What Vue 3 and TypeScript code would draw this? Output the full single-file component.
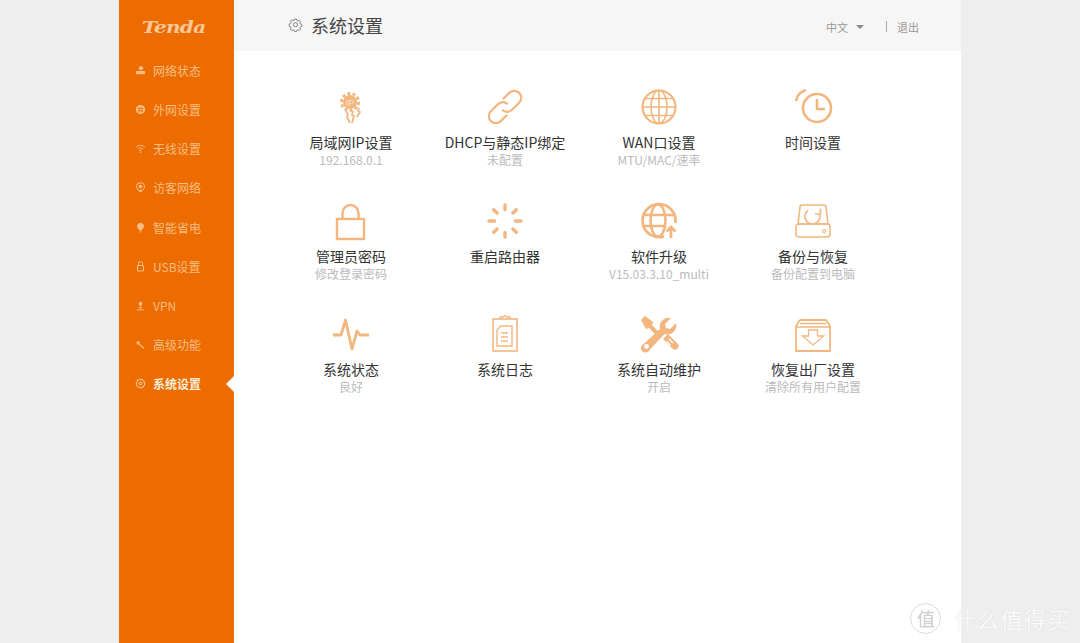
<template>
  <div class="page">
    <aside class="sidebar">
      <div class="logo"><span>Tenda</span></div>
      <ul class="menu">
        <li v-for="m in menu" :key="m.label" class="menu-item" :class="{ active: m.active }">
          <svg class="menu-icon" viewBox="0 0 12 12" v-html="m.icon"></svg>
          <span>{{ m.label }}</span>
        </li>
      </ul>
    </aside>
    <main class="main">
      <header class="topbar">
        <div class="title">
          <svg class="title-icon" viewBox="0 0 16 16" fill="none" stroke="#777" stroke-width="1">
            <path d="M6.8 1.5h2.4l.4 1.8 1.3.6 1.6-1 1.6 1.7-1 1.5.6 1.3 1.8.4v2.4l-1.8.4-.6 1.3 1 1.5-1.6 1.7-1.6-1-1.3.6-.4 1.8H6.8l-.4-1.8-1.3-.6-1.6 1-1.6-1.7 1-1.5-.6-1.3-1.8-.4V7.4l1.8-.4.6-1.3-1-1.5 1.6-1.7 1.6 1 1.3-.6z" transform="translate(.8 .8) scale(.9)" />
            <circle cx="8" cy="8.2" r="2.2" />
          </svg>
          <h1>系统设置</h1>
        </div>
        <div class="top-actions">
          <span class="lang">中文<i class="caret"></i></span>
          <span class="sep"></span>
          <span class="logout">退出</span>
        </div>
      </header>
      <section class="grid">
        <div v-for="c in cards" :key="c.title" class="card">
          <svg class="card-icon" viewBox="0 0 40 40" fill="none" stroke="#f3b67f" stroke-width="2" v-html="c.icon"></svg>
          <div class="card-title">{{ c.title }}</div>
          <div class="card-sub">{{ c.sub }}</div>
        </div>
      </section>
    </main>
    <div class="watermark">
      <span class="wm-badge">值</span>
      <span>什么值得买</span>
    </div>
  </div>
</template>

<script setup lang="ts">
const menu: { label: string; icon: string; active?: boolean }[] = [
  {
    label: '网络状态',
    icon: '<circle cx="6.5" cy="3.5" r="2.3" fill="#f8bd85"/><rect x="1" y="6.5" width="10" height="3.5" rx="1" fill="#f8bd85"/>'
  },
  {
    label: '外网设置',
    icon: '<circle cx="6" cy="6" r="5" fill="#f8bd85"/><path d="M3 5h6M3 7.500h6M4.600 3v6.500M7.400 3v6.500" stroke="#ec6c00" stroke-width=".8"/>'
  },
  {
    label: '无线设置',
    icon: '<path d="M1.200 4.400a7 7 0 0 1 9.600 0M3 6.400a4.400 4.400 0 0 1 6 0M4.600 8.200a2 2 0 0 1 2.800 0" fill="none" stroke="#f8bd85" stroke-width="1"/><circle cx="6" cy="10" r=".9" fill="#f8bd85"/>'
  },
  {
    label: '访客网络',
    icon: '<circle cx="6" cy="5" r="4.300" fill="none" stroke="#f8bd85" stroke-width="1.100"/><circle cx="6" cy="5" r="2" fill="#f8bd85"/><path d="M4 10.500h4" stroke="#f8bd85" stroke-width="1"/>'
  },
  {
    label: '智能省电',
    icon: '<path d="M6 .8a3.900 3.900 0 0 1 2.200 7.100L7.500 9.200h-3l-.7-1.300A3.900 3.900 0 0 1 6 .8z" fill="#f8bd85"/><path d="M4.800 10.800h2.400" stroke="#f8bd85" stroke-width="1"/>'
  },
  {
    label: 'USB设置',
    icon: '<path d="M3.800 5V1.200h4.400V5" fill="none" stroke="#f8bd85" stroke-width="1"/><rect x="2.700" y="5" width="6.600" height="6" rx=".6" fill="none" stroke="#f8bd85" stroke-width="1.100"/>'
  },
  {
    label: 'VPN',
    icon: '<circle cx="6" cy="4" r="2" fill="#f8bd85"/><path d="M6 4v5M4 7.500 6 9.500l2-2M2 10.800h8" fill="none" stroke="#f8bd85" stroke-width="1"/>'
  },
  {
    label: '高级功能',
    icon: '<path d="M1.500 4.200 3.600 2l1.700 2-.6.9L10.500 10l-1 1-5.400-5-1 .4z" fill="#f8bd85"/>'
  },
  {
    label: '系统设置',
    active: true,
    icon: '<circle cx="6" cy="6" r="4.600" fill="none" stroke="#fbd9b8" stroke-width="1.100" stroke-dasharray="2.200 .5"/><circle cx="6" cy="6" r="1.700" fill="none" stroke="#fbd9b8" stroke-width="1"/>'
  }
]

const cards: { title: string; sub: string; icon: string }[] = [
  {
    title: '局域网IP设置',
    sub: '192.168.0.1',
    icon: '<circle cx="19" cy="15" r="8.500" stroke-width="3" stroke-dasharray="3 2.300"/><circle cx="19" cy="15" r="7" fill="#f3b67f" stroke="none"/><text x="19" y="18.500" text-anchor="middle" font-size="9" font-family="Liberation Sans" fill="#fde6cf" stroke="none">IP</text><path d="M15 24l2 4-1 2 3 6M22 24l-1 4 2 1-2 7M28 21l-1 3 2 1-3 5" stroke-width="1.800"/>'
  },
  {
    title: 'DHCP与静态IP绑定',
    sub: '未配置',
    icon: '<g transform="rotate(-45 20 20)" stroke-width="2.200"><path d="M24 13h9a7 7 0 0 1 0 14H23a7 7 0 0 1-7-7"/><path d="M16 27H7a7 7 0 0 1 0-14h10a7 7 0 0 1 7 7"/></g>'
  },
  {
    title: 'WAN口设置',
    sub: 'MTU/MAC/速率',
    icon: '<circle cx="20" cy="20" r="16.500" stroke-width="2.200"/><ellipse cx="20" cy="20" rx="8" ry="16.500" stroke-width="1.600"/><path d="M20 3.500v33M3.500 20h33M6 11.500h28M6 28.500h28" stroke-width="1.600"/>'
  },
  {
    title: '时间设置',
    sub: '',
    icon: '<circle cx="24" cy="21" r="14" stroke-width="2.600"/><path d="M24 12v10h8" stroke-width="2.600"/><path d="M3 14A14 14 0 0 1 13 3" stroke-width="2.600"/>'
  },
  {
    title: '管理员密码',
    sub: '修改登录密码',
    icon: '<rect x="6" y="18" width="27" height="20" stroke-width="2.400"/><path d="M11.500 18v-6a8 8 0 0 1 16 0v6" stroke-width="2.400"/>'
  },
  {
    title: '重启路由器',
    sub: '',
    icon: '<g stroke-width="3.400" stroke-linecap="round"><path d="M20 4v4.500M20 31.500V36M4 20h5.500M30.500 20H36M8.700 8.700l3.400 3.200M27.900 28.100l3.400 3.200M8.700 31.300l3.400-3.200M27.900 11.900l3.400-3.200"/></g>'
  },
  {
    title: '软件升级',
    sub: 'V15.03.3.10_multi',
    icon: '<path d="M25 35.400A16.500 16.500 0 1 1 36.400 22" stroke-width="2.800"/><ellipse cx="19" cy="19.500" rx="7.500" ry="16" stroke-width="2.600"/><path d="M3 14h32M3 25h24" stroke-width="2.600"/><path d="M32 37V26M27.500 30.500 32 26l4.500 4.500" stroke-width="2.800"/>'
  },
  {
    title: '备份与恢复',
    sub: '备份配置到电脑',
    icon: '<path d="M9 4h22a2 2 0 0 1 2 2l2 17H5L7 6a2 2 0 0 1 2-2z" stroke-width="1.600"/><rect x="3" y="23" width="34" height="13" rx="3" stroke-width="1.600"/><circle cx="31" cy="30" r="1.500" stroke-width="1.200"/><path d="M15 9.500a7.500 7.500 0 1 0 11.500 3.500M27.500 7.500v5.500H22" stroke-width="1.600"/>'
  },
  {
    title: '系统状态',
    sub: '良好',
    icon: '<path d="M2 21h8l4.500-15 6.500 29 5-18 3 4h9" stroke-width="2.800" stroke-linejoin="round"/>'
  },
  {
    title: '系统日志',
    sub: '',
    icon: '<rect x="8" y="5" width="24" height="32" stroke-width="1.600"/><path d="M15 5V3h3l2-1.500L22 3h3v2" stroke-width="1.400"/><path d="M16 12h11v20H12V16z" stroke-width="1.400"/><path d="M16 19h7M16 23h7M16 27h7" stroke-width="1.400"/>'
  },
  {
    title: '系统自动维护',
    sub: '开启',
    icon: '<path d="M2 6 6 2l8 6-1 3 7 7-3 3-7-7-3 1z" fill="#f3b67f" stroke="none"/><path d="M37 9 31 15l-4-1-1-4 6-6a9 9 0 0 0-11 11L4.500 30a4.500 4.500 0 1 0 6 6L25.500 20a9 9 0 0 0 11.500-11z" fill="#f3b67f" stroke="none"/><circle cx="7.500" cy="32.500" r="2.400" fill="#fff" stroke="none"/><path d="m24 25 5-5 9.500 9.500a3.500 3.500 0 0 1-5 5z" fill="#f3b67f" stroke="none"/><path d="m30 25 4 4M27.500 27.500l4 4" stroke="#fff" stroke-width="1.400"/>'
  },
  {
    title: '恢复出厂设置',
    sub: '清除所有用户配置',
    icon: '<path d="M8 6h24a2 2 0 0 1 1.500.7L37 12v25H3V12l3.500-5.300A2 2 0 0 1 8 6z" stroke-width="1.800" stroke-linejoin="round"/><path d="M3 13h34M7 9.500h26" stroke-width="1.300"/><path d="M15.500 16h9v6h6L20 31 9.500 22h6z" stroke-width="1.300"/>'
  }
]
</script>

<style>
body {
  background: #eeeeee;
}
</style>

<style scoped>
.page {
  display: flex;
  width: 842px;
  height: 643px;
  margin-left: 119px;
  font-family: "Noto Sans CJK SC", "Liberation Sans", sans-serif;
}

.sidebar {
  width: 115px;
  flex-shrink: 0;
  background: #ec6c00;
}

.logo {
  height: 51px;
  padding: 14px 0 0 23px;
  box-sizing: border-box;
  font-family: "DejaVu Serif", serif;
  font-style: italic;
  font-weight: 700;
  font-size: 17px;
  line-height: 26px;
  letter-spacing: -0.6px;
  color: #f8c898;
}

.logo span {
  display: inline-block;
  transform: scaleX(1.18);
  transform-origin: left center;
}

.menu {
  list-style: none;
  margin: 0;
  padding: 0;
}

.menu-item {
  position: relative;
  display: flex;
  align-items: center;
  height: 39.15px;
  padding-left: 16px;
  font-size: 12px;
  color: #f8bd85;
}

.menu-item.active {
  color: #fdeedd;
  font-weight: 700;
}

.menu-item.active::after {
  content: "";
  position: absolute;
  right: 0;
  top: 50%;
  margin-top: -8px;
  border: 8px solid transparent;
  border-left-width: 0;
  border-right-color: #fff;
}

.menu-icon {
  width: 11px;
  height: 11px;
  margin-right: 7px;
  flex-shrink: 0;
}

.main {
  flex: 1;
  min-width: 0;
  background: #fff;
}

.topbar {
  display: flex;
  align-items: center;
  justify-content: space-between;
  height: 51px;
  padding: 0 42px 2px 54px;
  box-sizing: border-box;
  background: #f6f6f6;
}

.title {
  display: flex;
  align-items: center;
  gap: 8px;
}

.title-icon {
  width: 15px;
  height: 15px;
}

h1 {
  margin: 0;
  font-size: 18px;
  font-weight: 400;
  color: #444;
}

.top-actions {
  display: flex;
  align-items: center;
  margin-top: 4px;
  font-size: 11px;
  color: #999;
}

.lang {
  display: flex;
  align-items: center;
}

.caret {
  margin-left: 8px;
  border: 4px solid transparent;
  border-top-color: #888;
  border-bottom-width: 0;
}

.sep {
  width: 1px;
  height: 11px;
  margin: 0 10px 0 22px;
  background: #aaa;
}

.grid {
  display: grid;
  grid-template-columns: repeat(4, 154px);
  grid-auto-rows: 113.5px;
  padding: 36px 0 0 40px;
}

.card {
  display: flex;
  flex-direction: column;
  align-items: center;
}

.card-icon {
  width: 40px;
  height: 40px;
  margin-bottom: 6px;
}

.card-title {
  font-size: 14px;
  line-height: 18px;
  margin-bottom: 1px;
  color: #333;
  white-space: nowrap;
}

.card-sub {
  font-size: 12px;
  line-height: 16px;
  color: #bbb;
  white-space: nowrap;
}

.watermark {
  position: fixed;
  right: 9px;
  bottom: 9px;
  display: flex;
  align-items: center;
  gap: 12px;
  font-size: 22px;
  letter-spacing: 1.5px;
  color: rgba(255, 255, 255, 0.85);
  text-shadow: 0 0 1px rgba(190, 190, 190, 0.5);
}

.wm-badge {
  display: flex;
  align-items: center;
  justify-content: center;
  width: 29px;
  height: 29px;
  border: 1px solid rgba(210, 210, 210, 0.8);
  border-radius: 50%;
  font-size: 18px;
  letter-spacing: 0;
  color: rgba(205, 205, 205, 0.9);
}
</style>
